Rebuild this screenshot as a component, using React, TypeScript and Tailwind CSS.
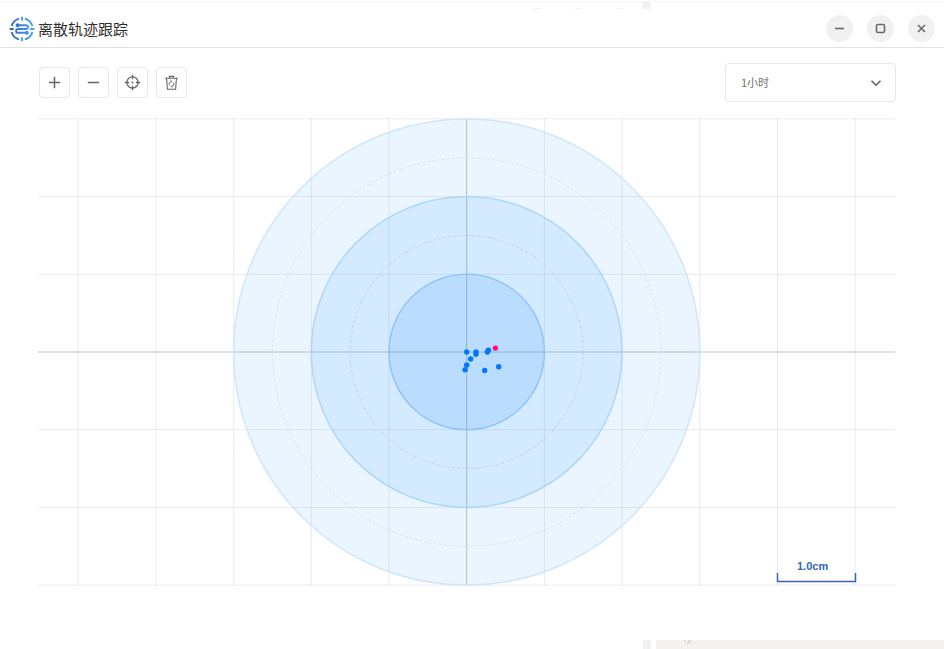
import { useState } from "react";

const STEP = 77.7;
const CX = 428.7;
const CY = 234;

const columns = [-5, -4, -3, -2, -1, 1, 2, 3, 4, 5];
const rows = [-3, -2, -1, 1, 2, 3];

const rings = [
  { r: STEP * 3, opacity: 0.09, stroke: "#cfe6fb" },
  { r: STEP * 2, opacity: 0.105, stroke: "#add7fa" },
  { r: STEP, opacity: 0.133, stroke: "#90c6f6" },
];

const points = [
  { x: 0, y: 0 },
  { x: 9.3, y: 0 },
  { x: 9.3, y: 2.3 },
  { x: 21.7, y: -1.7 },
  { x: 20.7, y: 0 },
  { x: 4, y: 7 },
  { x: 0, y: 13 },
  { x: -1.6, y: 17.8 },
  { x: 18, y: 18.4 },
  { x: 32, y: 14.7 },
];

const latest = { x: 28.7, y: -3.9 };

const ranges = ["1小时", "6小时", "12小时", "24小时"];

function Logo() {
  return (
    <svg className="size-[26px]" viewBox="0 0 26 26" fill="none" aria-hidden="true">
      <defs>
        <linearGradient id="logo" gradientUnits="userSpaceOnUse" x1="1" y1="13" x2="25" y2="13">
          <stop offset="0" stopColor="#3565bd" />
          <stop offset="1" stopColor="#48a4f5" />
        </linearGradient>
      </defs>
      <g stroke="url(#logo)" strokeWidth="1.9">
        <path d="M15.9 2.6A10.8 10.8 0 0 1 23.4 10.1M23.4 15.9A10.8 10.8 0 0 1 15.9 23.4M10.1 23.4A10.8 10.8 0 0 1 2.6 15.9M2.6 10.1A10.8 10.8 0 0 1 10.1 2.6" />
        <path d="M12.2 .8h1.6v4h-1.6zM12.2 21.2h1.6v4h-1.6z" fill="url(#logo)" stroke="none" />
        <path d="M.6 13h4.2M21.2 13h4.2" />
        <path d="M8.5 9.2H17a1.9 1.9 0 0 1 0 3.8H9a1.9 1.9 0 0 0 0 3.8h8.5" />
      </g>
      <circle cx="8.6" cy="9.2" r="2" fill="#3b74ca" />
      <circle cx="17.8" cy="16.8" r="2" fill="#4495e7" />
    </svg>
  );
}

function WindowButton({ label, children }: { label: string; children: React.ReactNode }) {
  return (
    <button
      type="button"
      aria-label={label}
      className="flex size-[27px] items-center justify-center rounded-full bg-[#f1f1f1] text-[#6a6a6a]"
    >
      <svg className="size-[13px]" viewBox="0 0 13 13" fill="none" stroke="currentColor" strokeWidth="1.6" aria-hidden="true">
        {children}
      </svg>
    </button>
  );
}

function ToolButton({
  label,
  onClick,
  children,
}: {
  label: string;
  onClick?: () => void;
  children: React.ReactNode;
}) {
  return (
    <button
      type="button"
      aria-label={label}
      onClick={onClick}
      className="flex size-[31px] items-center justify-center rounded border border-[#e6e6e6] bg-white text-[#666]"
    >
      <svg className="size-[17px]" viewBox="0 0 17 17" fill="none" stroke="currentColor" strokeWidth="1.3" aria-hidden="true">
        {children}
      </svg>
    </button>
  );
}

function TrackChart({ cleared }: { cleared: boolean }) {
  return (
    <svg className="block h-auto w-full" viewBox="0 0 857 468" fill="none" role="img" aria-label="离散轨迹">
      <g stroke="#000" strokeOpacity="0.08">
        {columns.map((n) => (
          <line key={n} x1={CX + n * STEP} x2={CX + n * STEP} y1="0" y2="468" />
        ))}
        {rows.map((n) => (
          <line key={n} x1="0" x2="857" y1={CY + n * STEP} y2={CY + n * STEP} />
        ))}
      </g>
      <g stroke="#000" strokeOpacity="0.24">
        <line x1={CX} x2={CX} y1="0" y2="468" />
        <line x1="0" x2="857" y1={CY} y2={CY} />
      </g>

      {rings.map((ring) => (
        <g key={ring.r}>
          <circle
            cx={CX}
            cy={CY}
            r={ring.r}
            fill="#1890ff"
            fillOpacity={ring.opacity}
            stroke={ring.stroke}
            strokeWidth="1.5"
          />
          {ring.r > STEP && (
            <circle cx={CX} cy={CY} r={ring.r - STEP / 2} stroke={ring.stroke} strokeWidth="1" strokeDasharray="3 2" />
          )}
        </g>
      ))}

      {!cleared && (
        <g fill="#0078f8">
          {points.map((p, i) => (
            <circle key={i} cx={CX + p.x} cy={CY + p.y} r="2.7" />
          ))}
          <circle cx={CX + latest.x} cy={CY + latest.y} r="2.7" fill="#ff0a80" />
        </g>
      )}

      {/* scale: one grid cell */}
      <path d="M739.5 455v8.5H817.5V455" stroke="#3464c0" strokeWidth="1.5" />
      <text x="759" y="452" fill="#3464c0" fontSize="11" fontWeight="700" fontFamily="Liberation Sans, sans-serif">
        1.0cm
      </text>
    </svg>
  );
}

export default function App() {
  const [range, setRange] = useState(ranges[0]);
  const [cleared, setCleared] = useState(false);

  return (
    <div className="flex min-h-screen flex-col bg-white font-['Noto_Sans_CJK_SC',sans-serif]">
      {/* window underneath, top edge */}
      <div className="flex h-[9px] flex-col overflow-hidden" aria-hidden="true">
        <div className="mt-px flex h-2 shrink-0 items-start justify-end border-t border-[#f5f5f5] pr-[293px]">
          <div className="mr-[10px] flex gap-[14px] pt-[6px]">
            <span className="size-[27px] rounded-full bg-[#efefef]" />
            <span className="size-[27px] rounded-full bg-[#efefef]" />
            <span className="size-[27px] rounded-full bg-[#efefef]" />
          </div>
          <span className="-mt-px h-2 w-2 bg-[#f1f1f1]" />
        </div>
      </div>

      <header className="flex h-[39px] items-center justify-between border-b border-[#e2e2e2] pt-px pr-[9px] pl-[9px]">
        <div className="flex items-center gap-[3px]">
          <Logo />
          <h1 className="text-[15px] leading-5 text-[#2e2e2e]">离散轨迹跟踪</h1>
        </div>
        <div className="flex gap-[14px]">
          <WindowButton label="最小化">
            <path d="M2 6.5h9" />
          </WindowButton>
          <WindowButton label="最大化">
            <rect x="2.5" y="2.5" width="8" height="8" rx="1.4" />
          </WindowButton>
          <WindowButton label="关闭">
            <path d="M3 3l7 7M10 3l-7 7" />
          </WindowButton>
        </div>
      </header>

      <main className="flex-1 pt-[15px] pr-[49px] pb-8 pl-[38px]">
        <div className="-mr-px flex items-center justify-between pl-px">
          <div className="flex gap-2">
            <ToolButton label="放大">
              <path d="M8.5 2.8v11.4M2.8 8.5h11.4" strokeWidth="1.5" />
            </ToolButton>
            <ToolButton label="缩小">
              <path d="M2.8 8.5h11.4" strokeWidth="1.5" />
            </ToolButton>
            <ToolButton label="居中">
              <circle cx="8.5" cy="8.5" r="5.6" strokeWidth="1.2" />
              <circle cx="8.5" cy="8.5" r="1" fill="currentColor" stroke="none" />
              <path d="M8.5 .8v4.4M8.5 11.8v4.4M.8 8.5h4.4M11.8 8.5h4.4" />
            </ToolButton>
            <ToolButton label="清空" onClick={() => setCleared(true)}>
              <path d="M2 4.3h13M6.4 4.1V2.4h4.2v1.7M3.6 4.5l.8 10.7h8.2l.8-10.7" strokeWidth="1.1" />
              <path d="M6.4 11.2c-.8-2 .3-3.9 2.2-3.9M7.6 6.2l1.2 1.1-1.2 1.2M10.6 8.6c.8 2-.3 3.9-2.2 3.9M9.4 11.3l-1.2 1.2 1.2 1.1" strokeWidth="0.9" />
            </ToolButton>
          </div>

          <div className="relative">
            <select
              aria-label="时间范围"
              value={range}
              onChange={(e) => setRange(e.target.value)}
              className="block h-[39px] w-[171px] appearance-none rounded border border-[#e6e6e6] bg-white pl-[15px] text-[11px] text-[#707070]"
            >
              {ranges.map((r) => (
                <option key={r}>{r}</option>
              ))}
            </select>
            <svg
              className="pointer-events-none absolute top-[14px] right-[14px] size-3"
              viewBox="0 0 12 12"
              fill="none"
              stroke="#606060"
              strokeWidth="1.6"
              aria-hidden="true"
            >
              <path d="M1.5 3.8L6 8.2l4.5-4.4" />
            </svg>
          </div>
        </div>

        <div className="mt-4">
          <TrackChart cleared={cleared} />
        </div>
      </main>

      {/* window underneath, bottom edge */}
      <div className="flex h-[9px] justify-end gap-[5px]" aria-hidden="true">
        <div className="w-2 bg-[#f1f1f1]" />
        <div className="w-[288px] bg-[#f3f2ef] pl-7">
          <svg className="h-1 w-2" viewBox="0 0 8 4" fill="none" stroke="#cfcfcf">
            <path d="M1 0v3M3 3.5l2-.3M5 0L4 3M7 0L6 3" />
          </svg>
        </div>
      </div>
    </div>
  );
}
